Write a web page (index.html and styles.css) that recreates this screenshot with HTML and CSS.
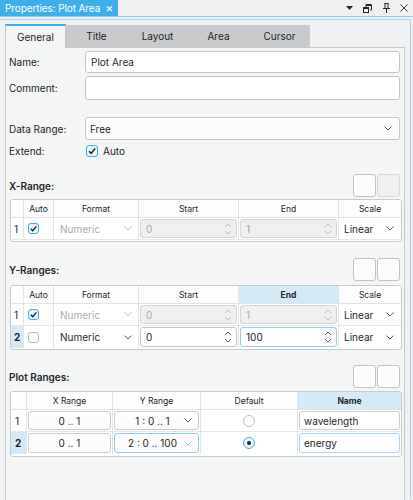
FILE: index.html
```html
<!DOCTYPE html>
<html>
<head>
<meta charset="utf-8">
<link rel="stylesheet" href="styles.css">
</head>
<body>
<div class="titlebar">
  <div class="dtab"><span class="dtitle">Properties: Plot Area</span><span class="dclose">×</span></div>
  <div class="tbicons">
    <svg class="ic ic-menu" viewBox="0 0 7 4"><path d="M0 0h7L3.5 4z"/></svg>
    <svg class="ic ic-float" viewBox="0 0 9 9"><path d="M3 .5h5.5v5.5H7M3 .5V3M3 1.5h5.5" /><rect x=".5" y="3.5" width="5" height="5"/><path d="M.5 4.5h5"/></svg>
    <svg class="ic ic-pin" viewBox="0 0 9 10"><path d="M2.5.5h4M3 .5v5M6 .5v5M1 5.5h7M4.5 5.5V10"/></svg>
    <svg class="ic ic-close" viewBox="0 0 9 9"><path d="M.5.5l8 8M8.5.5l-8 8"/></svg>
  </div>
</div>
<div class="dock">
  <div class="tabbar">
    <div class="tab active">General</div>
    <div class="tab">Title</div>
    <div class="tab">Layout</div>
    <div class="tab">Area</div>
    <div class="tab">Cursor</div>
  </div>
  <div class="pane">
    <div class="frow r-name"><span class="lbl">Name:</span><div class="edit">Plot Area</div></div>
    <div class="frow r-comment"><span class="lbl">Comment:</span><div class="edit"></div></div>
    <div class="frow r-range"><span class="lbl">Data Range:</span><div class="combo"><span>Free</span><svg class="chev" viewBox="0 0 8 5"><path d="M.5.5 4 4 7.5.5"/></svg></div></div>
    <div class="frow r-extend"><span class="lbl">Extend:</span><div class="cb on"><svg viewBox="0 0 10 10"><path d="M2 5.2 4.2 7.4 8.2 2.6"/></svg></div><span class="cblbl">Auto</span></div>

    <div class="sechead"><span class="sectitle">X-Range:</span><div class="btns"><div class="sbtn"></div><div class="sbtn dis"></div></div></div>
    <div class="tbl t-range">
      <div class="hd">
        <div class="c c0"></div><div class="c">Auto</div><div class="c">Format</div><div class="c">Start</div><div class="c">End</div><div class="c clast">Scale</div>
      </div>
      <div class="rw">
        <div class="c c0">1</div>
        <div class="c cauto"><div class="cb sm on"><svg viewBox="0 0 10 10"><path d="M2 5.2 4.2 7.4 8.2 2.6"/></svg></div></div>
        <div class="c cfmt dis"><span>Numeric</span><svg class="chev" viewBox="0 0 8 5"><path d="M.5.5 4 4 7.5.5"/></svg></div>
        <div class="c cspin"><div class="spin dis"><span>0</span><svg class="arr" viewBox="0 0 8 14"><path d="M1 5 4 2 7 5M1 9l3 3 3-3"/></svg></div></div>
        <div class="c cspin"><div class="spin dis"><span>1</span><svg class="arr" viewBox="0 0 8 14"><path d="M1 5 4 2 7 5M1 9l3 3 3-3"/></svg></div></div>
        <div class="c cfmt clast"><span>Linear</span><svg class="chev" viewBox="0 0 8 5"><path d="M.5.5 4 4 7.5.5"/></svg></div>
      </div>
    </div>

    <div class="sechead s-y"><span class="sectitle">Y-Ranges:</span><div class="btns"><div class="sbtn"></div><div class="sbtn"></div></div></div>
    <div class="tbl t-range t-y">
      <div class="hd">
        <div class="c c0"></div><div class="c">Auto</div><div class="c">Format</div><div class="c">Start</div><div class="c sel">End</div><div class="c clast">Scale</div>
      </div>
      <div class="rw">
        <div class="c c0">1</div>
        <div class="c cauto"><div class="cb sm on"><svg viewBox="0 0 10 10"><path d="M2 5.2 4.2 7.4 8.2 2.6"/></svg></div></div>
        <div class="c cfmt dis"><span>Numeric</span><svg class="chev" viewBox="0 0 8 5"><path d="M.5.5 4 4 7.5.5"/></svg></div>
        <div class="c cspin"><div class="spin dis"><span>0</span><svg class="arr" viewBox="0 0 8 14"><path d="M1 5 4 2 7 5M1 9l3 3 3-3"/></svg></div></div>
        <div class="c cspin"><div class="spin dis"><span>1</span><svg class="arr" viewBox="0 0 8 14"><path d="M1 5 4 2 7 5M1 9l3 3 3-3"/></svg></div></div>
        <div class="c cfmt clast"><span>Linear</span><svg class="chev" viewBox="0 0 8 5"><path d="M.5.5 4 4 7.5.5"/></svg></div>
      </div>
      <div class="rw last">
        <div class="c c0 sel">2</div>
        <div class="c cauto"><div class="cb sm"></div></div>
        <div class="c cfmt"><span>Numeric</span><svg class="chev" viewBox="0 0 8 5"><path d="M.5.5 4 4 7.5.5"/></svg></div>
        <div class="c cspin"><div class="spin"><span>0</span><svg class="arr" viewBox="0 0 8 14"><path d="M1 5 4 2 7 5M1 9l3 3 3-3"/></svg></div></div>
        <div class="c cspin"><div class="spin focus"><span>100</span><svg class="arr" viewBox="0 0 8 14"><path d="M1 5 4 2 7 5M1 9l3 3 3-3"/></svg></div></div>
        <div class="c cfmt clast"><span>Linear</span><svg class="chev" viewBox="0 0 8 5"><path d="M.5.5 4 4 7.5.5"/></svg></div>
      </div>
    </div>

    <div class="sechead s-p"><span class="sectitle">Plot Ranges:</span><div class="btns"><div class="sbtn"></div><div class="sbtn"></div></div></div>
    <div class="tbl t-plot">
      <div class="hd">
        <div class="c c0"></div><div class="c">X Range</div><div class="c">Y Range</div><div class="c">Default</div><div class="c sel clast">Name</div>
      </div>
      <div class="rw">
        <div class="c c0">1</div>
        <div class="c cbox"><div class="pbtn">0 .. 1</div></div>
        <div class="c cbox"><div class="pcombo"><span>1 : 0 .. 1</span><svg class="chev" viewBox="0 0 8 5"><path d="M.5.5 4 4 7.5.5"/></svg></div></div>
        <div class="c crad"><div class="radio"></div></div>
        <div class="c cbox clast"><div class="nedit">wavelength</div></div>
      </div>
      <div class="rw last">
        <div class="c c0 sel">2</div>
        <div class="c cbox"><div class="pbtn">0 .. 1</div></div>
        <div class="c cbox"><div class="pcombo focus"><span>2 : 0 .. 100</span><svg class="chev" viewBox="0 0 8 5"><path d="M.5.5 4 4 7.5.5"/></svg></div></div>
        <div class="c crad"><div class="radio on"></div></div>
        <div class="c cbox clast"><div class="nedit focus">energy</div></div>
      </div>
    </div>
  </div>
</div>
</body>
</html>
```

FILE: styles.css
```css
* { box-sizing: border-box; }
html, body { margin: 0; padding: 0; }
body {
  width: 413px;
  height: 500px;
  overflow: hidden;
  background: #eff0f1;
  font-family: Inter, "Noto Sans", sans-serif;
  font-size: 10px;
  color: #232629;
}

/* dock title bar */
.titlebar {
  height: 17px;
  display: flex;
  border-bottom: 1px solid #93cdee;
  background: #eff0f1;
}
.dtab {
  width: 118px;
  flex: none;
  background: #3daee9;
  color: #fff;
  display: flex;
  align-items: center;
  padding-left: 5px;
  gap: 5px;
  font-size: 10px;
  white-space: nowrap;
}
.dtitle { letter-spacing: -0.1px; }
.dclose { font-size: 12px; line-height: 1; }
.tbicons {
  margin-left: auto;
  display: flex;
  align-items: center;
  padding-right: 5px;
}
.ic { display: block; fill: none; stroke: #232629; stroke-width: 1; }
.ic-menu { width: 7px; height: 4px; fill: #232629; stroke: none; margin-right: 10px; }
.ic-float { width: 9px; height: 9px; margin-right: 10px; }
.ic-pin { width: 9px; height: 10px; margin-right: 9px; }
.ic-close { width: 8px; height: 8px; }

/* dock body */
.dock {
  margin-top: 2px;
  width: 411px;
  height: 480px;
  border-top: 1px solid #a6d6f1;
  border-right: 1px solid #a6d6f1;
  padding: 4px 0 0 5px;
}
.tabbar { display: flex; height: 23px; }
.tab {
  width: 61px;
  margin-top: 1px;
  background: #c9cacb;
  display: flex;
  align-items: center;
  justify-content: center;
  font-size: 10px;
}
.tab.active {
  margin-top: 0;
  background: #f4f5f5;
  border-top: 2px solid #3daee9;
  border-left: 1px solid #c6c7c8;
  border-right: 1px solid #c6c7c8;
  position: relative;
  margin-bottom: -1px;
  height: 24px;
  padding-bottom: 1px;
}
.pane {
  width: 400px;
  height: 460px;
  background: #f4f5f5;
  border: 1px solid #c6c7c8;
  padding: 3px 4px 0 3px;
}

/* form rows */
.frow { display: flex; align-items: center; }
.lbl { width: 76px; flex: none; }
.r-name { height: 22px; margin-bottom: 3px; }
.r-comment { height: 24px; }
.r-range { height: 23px; margin-top: 17px; }
.r-extend { height: 16px; margin-top: 3px; }
.edit {
  flex: 1;
  height: 100%;
  background: #fff;
  border: 1px solid #c4c5c6;
  border-radius: 3px;
  padding-left: 5px;
  display: flex;
  align-items: center;
}
.combo {
  flex: 1;
  height: 100%;
  background: #fcfcfc;
  border: 1px solid #c4c5c6;
  border-radius: 3px;
  padding: 0 7px 0 4px;
  display: flex;
  align-items: center;
  justify-content: space-between;
}
.chev { width: 8px; height: 5px; fill: none; stroke: #5b5e61; stroke-width: 1; flex: none; }

.cb {
  width: 12px;
  height: 12px;
  border: 1px solid #b4b6b8;
  border-radius: 3px;
  background: #fff;
  margin-left: 1px;
  flex: none;
}
.cb svg { display: block; width: 10px; height: 10px; fill: none; stroke: #232629; stroke-width: 1.6; }
.cb.on { border-color: #3daee9; background: #eaf5fc; }
.cblbl { margin-left: 5px; }
.cb.sm { width: 11px; height: 11px; margin-left: 0; }
.cb.sm svg { width: 9px; height: 9px; }

/* section headers */
.sechead {
  display: flex;
  align-items: center;
  justify-content: space-between;
  height: 23px;
  margin-top: 15px;
}
.s-y { margin-top: 16px; }
.s-p { margin-top: 15px; }
.sectitle { font-weight: 600; }
.btns { display: flex; gap: 1px; }
.sbtn {
  width: 23px;
  height: 23px;
  background: #fcfcfc;
  border: 1px solid #c2c3c4;
  border-radius: 3px;
}
.sbtn.dis { background: #eeefef; border-color: #d6d7d8; }

/* tables */
.tbl {
  width: 392px;
  margin-left: 1px;
  margin-top: 2px;
  background: #fff;
  border: 1px solid #c8c9ca;
  border-radius: 3px;
  padding-bottom: 1px;
  overflow: hidden;
}
.t-y { margin-top: 4px; }
.t-plot { margin-top: 3px; padding-bottom: 2px; }
.hd, .rw { display: grid; }
.t-range .hd, .t-range .rw { grid-template-columns: 13px 30px 85px 100px 100px 62px; }
.t-plot .hd, .t-plot .rw { grid-template-columns: 16px 86px 88px 97px 103px; }
.hd { height: 18px; border-bottom: 1px solid #e2e3e4; background: #fdfdfd; }
.hd .c {
  font-size: 8.5px;
  display: flex;
  align-items: center;
  justify-content: center;
}
.rw { height: 22px; border-bottom: 1px solid #e6e7e8; }
.rw.last { border-bottom: none; height: 22px; }
.c { border-right: 1px solid #e2e3e4; min-width: 0; }
.clast { border-right: none; }
.hd .c.sel { background: #d5eaf7; font-weight: 700; }
.c0 { display: flex; align-items: center; justify-content: center; }
.c0.sel { background: #d5eaf7; font-weight: 700; }
.t-range .c0 { justify-content: flex-start; padding-left: 3px; }
.t-plot .c0 { justify-content: flex-start; padding-left: 4px; }
.cauto { display: flex; align-items: center; padding-left: 4px; }
.cfmt {
  display: flex;
  align-items: center;
  justify-content: space-between;
  padding: 0 6px 0 6px;
}
.cfmt.clast { padding-left: 5px; padding-right: 7px; }
.cfmt.dis { color: #a7a9ab; }
.cfmt.dis .chev { stroke: #b7b9bb; }
.cspin { padding: 1px 1px 1px 1px; }
.spin {
  height: 100%;
  background: #fff;
  border: 1px solid #c4c5c6;
  border-radius: 3px;
  display: flex;
  align-items: center;
  justify-content: space-between;
  padding: 0 4px 0 5px;
}
.spin.dis { background: #efefef; border-color: #d3d4d5; color: #a7a9ab; }
.spin.focus { border-color: #93cdee; }
.arr { width: 8px; height: 14px; fill: none; stroke: #5b5e61; stroke-width: 1; }
.spin.dis .arr { stroke: #b9bbbd; }

.cbox { padding: 1px 1px; }
.pbtn, .pcombo, .nedit {
  height: 100%;
  border: 1px solid #cbcccd;
  border-radius: 3px;
  background: #fcfcfc;
  display: flex;
  align-items: center;
}
.pbtn { justify-content: center; }
.pcombo { padding: 0 6px 0 0; }
.pcombo span { flex: 1; text-align: center; padding-left: 6px; }
.pcombo.focus { border-color: #93cdee; }
.pcombo.focus .chev { stroke: #93cdee; }
.nedit { background: #fff; padding-left: 4px; }
.nedit.focus { border-color: #a9d6f1; }
.crad { display: flex; align-items: center; justify-content: center; }
.radio {
  width: 12px;
  height: 12px;
  border-radius: 50%;
  border: 1px solid #b9bbbd;
  background: #fff;
  display: flex;
  align-items: center;
  justify-content: center;
}
.radio.on { border-color: #3daee9; background: #eaf5fc; }
.radio.on::after {
  content: "";
  width: 4px;
  height: 4px;
  border-radius: 50%;
  background: #232629;
}
```
